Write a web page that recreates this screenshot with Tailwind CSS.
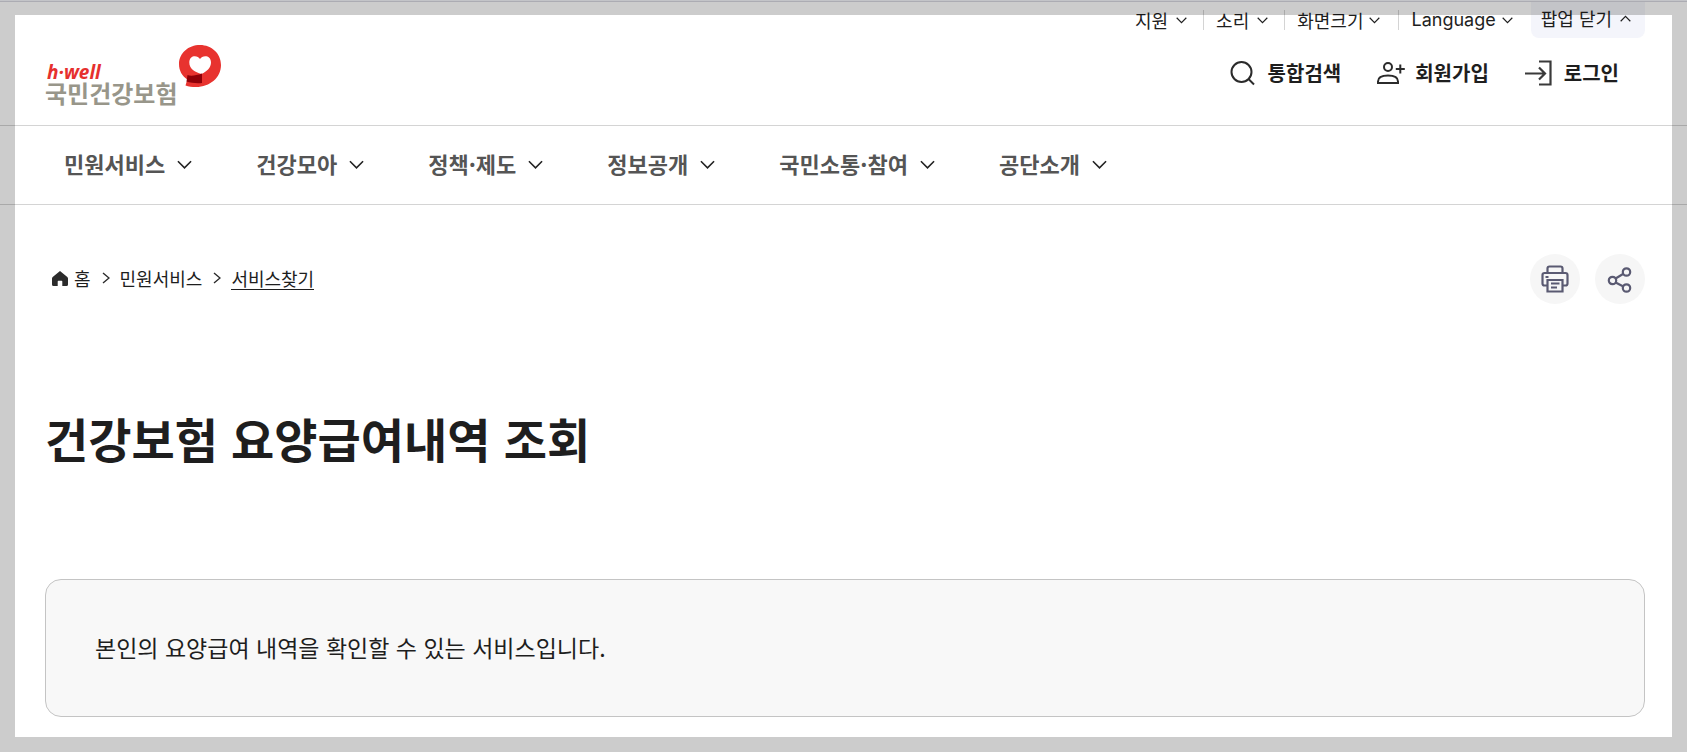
<!DOCTYPE html>
<html lang="ko">

<head>
    <meta charset="UTF-8">
    <meta name="viewport" content="width=device-width, initial-scale=1.0">
    <title>건강보험 요양급여내역 조회 | 국민건강보험</title>
    <script src="https://cdn.jsdelivr.net/npm/@tailwindcss/browser@4"></script>
</head>

<body class="min-h-screen bg-white text-[#1e1e1e] font-['Noto_Sans_CJK_KR',sans-serif]">
    <!-- Shared icons -->
    <svg class="hidden">
        <symbol id="chevron" viewBox="0 0 16 10">
            <path d="M1 1l7 7 7-7" fill="none" stroke="currentColor" stroke-width="1.7" />
        </symbol>
    </svg>

    <!-- Header -->
    <header class="border-t border-[#f4f5fb]">
        <div class="flex justify-between border-t border-b border-t-[#d8d8e0] border-b-[#d4d4d4] pl-[45px] pr-[42px]">
            <a href="/" class="flex pt-[43px] pb-[19px]" aria-label="국민건강보험">
                <span class="flex flex-col pt-[19px]">
                    <span class="pl-0.5 text-[19px] leading-[16px] font-bold italic text-[#e6302e] font-['Open_Sans',sans-serif]">h·well</span>
                    <span class="text-[24px] leading-[26px] font-bold text-[#98968a]">국민건강보험</span>
                </span>
                <svg class="ml-0.5 h-[42px] w-[42px]" viewBox="0 0 42 42">
                    <path d="M21 0C32.600 0 42 8.500 42 20C42 32.500 31 42 17 42C13 42 9.500 41.500 6.500 40.500L8.300 34.500C3 31 0 25.500 0 19C0 8 9.500 0 21 0Z" fill="#e8332f" />
                    <path d="M21 14C19 10 10.300 9.500 10.300 17.500C10.300 24 16 27 22.500 29C28 26.500 32 22.500 32 17.500C32 9.500 23 10 21 14Z" fill="#fff" />
                    <path d="M8.500 30C12 31.500 17 30.500 23 28.500V38C18 38.500 12 38 7.500 36.500Z" fill="#8f0008" />
                </svg>
            </a>

            <div class="flex flex-col items-end">
                <ul class="flex text-[18px] leading-[20px]">
                    <li class="flex items-center"><button class="flex items-center gap-2 pr-4">지원 <svg class="h-[7px] w-[11px]"><use href="#chevron" /></svg></button></li>
                    <li class="flex items-center before:h-5 before:w-px before:bg-[#d4d4d4]"><button class="flex items-center gap-2 pl-3 pr-4">소리 <svg class="h-[7px] w-[11px]"><use href="#chevron" /></svg></button></li>
                    <li class="flex items-center before:h-5 before:w-px before:bg-[#d4d4d4]"><button class="flex items-center gap-1.5 pl-3 pr-[18px]">화면크기 <svg class="h-[7px] w-[11px]"><use href="#chevron" /></svg></button></li>
                    <li class="flex items-center before:h-5 before:w-px before:bg-[#d4d4d4]"><button class="flex items-center gap-1.5 pl-3 pr-[18px]"><span class="font-[Inter,sans-serif]">Language</span> <svg class="h-[7px] w-[11px]"><use href="#chevron" /></svg></button></li>
                    <li><button class="flex h-9 items-center gap-2 rounded-b-lg bg-[#f4f5fb] pb-1 pl-2.5 pr-3.5">팝업 닫기 <svg class="h-[7px] w-[11px] rotate-180"><use href="#chevron" /></svg></button></li>
                </ul>
                <ul class="flex gap-9 pt-5 pr-[26px] text-[20px] leading-[30px] font-bold">
                    <li><button class="flex items-center gap-3">
                        <svg class="h-[26px] w-[26px]" viewBox="0 0 26 26" fill="none" stroke="#2b2b2b" stroke-width="2"><circle cx="11.500" cy="12" r="10" /><path d="M18.500 19l5.500 5.500" /></svg>
                        통합검색</button></li>
                    <li><button class="flex items-center gap-2.5">
                        <svg class="h-[26px] w-[28px]" viewBox="0 0 28 26" fill="none" stroke="#2b2b2b" stroke-width="2"><circle cx="11" cy="7" r="4" /><path d="M1 23v-1.500c0-4 4-6 10-6s10 2 10 6v1.500zM23.300 4.500v9M18.800 9h9" /></svg>
                        회원가입</button></li>
                    <li><button class="flex items-center gap-3">
                        <svg class="h-[26px] w-[27px]" viewBox="0 0 27 26" fill="none" stroke="#3a3a3a" stroke-width="2.200"><path d="M14 1.500h11.500v23H14M0 13.500h20M14 7.500l6 6-6 6" /></svg>
                        로그인</button></li>
                </ul>
            </div>
        </div>

        <!-- Main menu -->
        <nav class="border-b border-[#d4d4d4] pl-[64px]">
            <ul class="flex gap-16 text-[22px] leading-[74px] font-bold text-[#555]">
                <li><button class="flex items-center gap-3"><span class="pb-1">민원서비스</span> <svg class="h-[10px] w-[15px] text-[#222]"><use href="#chevron" /></svg></button></li>
                <li><button class="flex items-center gap-3"><span class="pb-1">건강모아</span> <svg class="h-[10px] w-[15px] text-[#222]"><use href="#chevron" /></svg></button></li>
                <li><button class="flex items-center gap-3"><span class="pb-1">정책·제도</span> <svg class="h-[10px] w-[15px] text-[#222]"><use href="#chevron" /></svg></button></li>
                <li><button class="flex items-center gap-3"><span class="pb-1">정보공개</span> <svg class="h-[10px] w-[15px] text-[#222]"><use href="#chevron" /></svg></button></li>
                <li><button class="flex items-center gap-3"><span class="pb-1">국민소통·참여</span> <svg class="h-[10px] w-[15px] text-[#222]"><use href="#chevron" /></svg></button></li>
                <li><button class="flex items-center gap-3"><span class="pb-1">공단소개</span> <svg class="h-[10px] w-[15px] text-[#222]"><use href="#chevron" /></svg></button></li>
            </ul>
        </nav>
    </header>

    <main class="pt-[49px] pb-9 pl-[45px] pr-[42px]">
        <div class="flex items-center justify-between">
            <!-- Breadcrumb -->
            <ol class="flex items-center pl-[7px] pb-0.5 text-[18px] leading-[22px]">
                <li><a href="/" class="flex items-center gap-1.5">
                    <svg class="h-[16px] w-[16px]" viewBox="0 0 16 16"><path d="M8 1L15.300 7Q16 7.600 16 8.500V14.500Q16 16 14.500 16H10.300V11.500Q10.300 10.800 9.600 10.800H6.400Q5.700 10.800 5.700 11.500V16H1.500Q0 16 0 14.500V8.500Q0 7.600.7 7Z" fill="#2b2b2b" /></svg>
                    홈</a></li>
                <li class="flex items-center">
                    <svg class="ml-[11px] mr-2.5 h-[12px] w-[8px]" viewBox="0 0 8 12" fill="none" stroke="#2b2b2b" stroke-width="1.400"><path d="M1 1l6 5-6 5" /></svg>
                    <a href="/service">민원서비스</a></li>
                <li class="flex items-center">
                    <svg class="ml-[11px] mr-2.5 h-[12px] w-[8px]" viewBox="0 0 8 12" fill="none" stroke="#2b2b2b" stroke-width="1.400"><path d="M1 1l6 5-6 5" /></svg>
                    <a href="/service/find" class="border-b border-[#1e1e1e]">서비스찾기</a></li>
            </ol>
            <div class="flex gap-[15px]">
                <button aria-label="인쇄" class="flex h-[50px] w-[50px] items-center justify-center rounded-full bg-[#f6f6f6]">
                    <svg class="h-[28px] w-[28px]" viewBox="0 0 28 28" fill="none" stroke="#5a5a72" stroke-width="2.200"><path d="M6.500 8V3.500Q6.500 1.500 8.500 1.500H19.500Q21.500 1.500 21.500 3.500V8M6 20.500H3.500Q1.500 20.500 1.500 18.500V10Q1.500 8 3.500 8H24.500Q26.500 8 26.500 10V18.500Q26.500 20.500 24.500 20.500H22M6.500 15H21.500V26.500H6.500ZM4.500 12H7.500M10 18.500H18.500M10 22.500H16" /></svg>
                </button>
                <button aria-label="공유" class="flex h-[50px] w-[50px] items-center justify-center rounded-full bg-[#f6f6f6]">
                    <svg class="h-[28px] w-[26px]" viewBox="0 0 26 28" fill="none" stroke="#5a5a72" stroke-width="2.200"><circle cx="5.500" cy="15.500" r="3.700" /><circle cx="19.500" cy="7" r="3.700" /><circle cx="19.500" cy="23" r="3.700" /><path d="M8.600 13.500l7.800-4.700M8.600 17.500l7.800 4" /></svg>
                </button>
            </div>
        </div>

        <h1 class="pt-[98px] text-[47px] leading-[72px] font-bold">건강보험 요양급여내역 조회</h1>

        <div class="mt-[105px] rounded-2xl border border-[#c4c4c4] bg-[#f8f8f8] px-[49px] py-[50px]">
            <p class="text-[23px] leading-[34px] pb-0.5">본인의 요양급여 내역을 확인할 수 있는 서비스입니다.</p>
        </div>
    </main>

    <!-- Dimmed edge -->
    <div class="pointer-events-none fixed inset-0 border-[15px] border-black/20"></div>
</body>

</html>
